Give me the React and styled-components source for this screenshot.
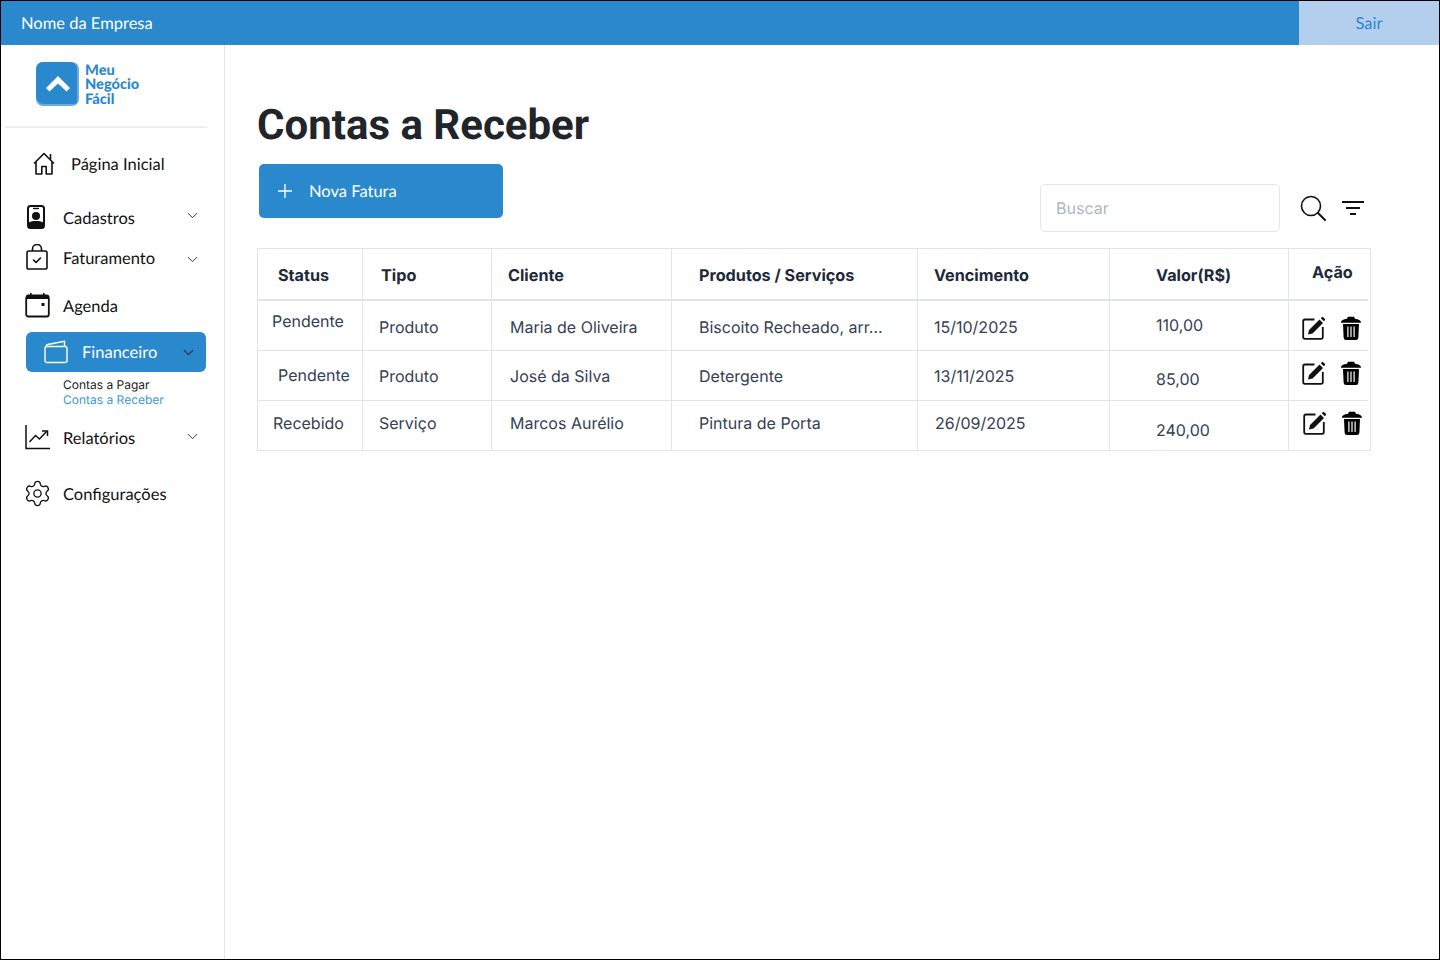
import React from 'react'
import styled, { createGlobalStyle } from 'styled-components'
import { ChevronDown, Plus, Settings } from 'lucide-react'

const GlobalStyle = createGlobalStyle`
  html, body {
    margin: 0;
    padding: 0;
    background: #fff;
    text-rendering: geometricPrecision;
  }
  * {
    box-sizing: border-box;
  }
`

const Frame = styled.div`
  width: 1440px;
  height: 960px;
  border: 1px solid #000;
  display: flex;
  flex-direction: column;
  overflow: hidden;
  font-family: Lato, sans-serif;
`

const TopBar = styled.header`
  height: 44px;
  flex: none;
  display: flex;
  align-items: center;
  justify-content: space-between;
  background: #2a88cc;
`

const CompanyName = styled.span`
  margin-left: 20px;
  font-size: 16.5px;
  color: #fff;
`

const LogoutButton = styled.button`
  width: 140px;
  height: 44px;
  border: 0;
  padding: 0;
  background: #b4cfee;
  color: #2a88cc;
  font: 16.5px Lato, sans-serif;
  text-rendering: geometricPrecision;
`

const Body = styled.div`
  flex: 1;
  display: flex;
  min-height: 0;
`

const Sidebar = styled.aside`
  width: 224px;
  flex: none;
  border-right: 1px solid #e2e4e9;
  padding: 17px 17px 0 4px;
`

const Brand = styled.div`
  height: 66px;
  padding-left: 31px;
  display: flex;
  align-items: flex-start;
  gap: 6px;
  border-bottom: 2px solid #eeeef2;
`

const BrandName = styled.div`
  font-size: 14.6px;
  line-height: 14.3px;
  font-weight: 900;
  color: #2a88cc;
  margin-top: 2px;
`

const Nav = styled.nav`
  display: flex;
  flex-direction: column;
  padding-top: 7px;
`

const NavRow = styled.div`
  height: ${p => p.$h}px;
  margin-top: ${p => p.$mt || 0}px;
  padding-left: ${p => p.$pl || 20}px;
  padding-right: 6px;
  display: flex;
  align-items: center;
  font-size: 16.5px;
  color: #111;
`

const NavIcon = styled.span`
  width: ${p => p.$w || 38}px;
  flex: none;
  display: flex;
  align-items: center;
`

const NavLabel = styled.span`
  flex: 1;
  padding-top: 2px;
`

const ActiveLabel = styled.span`
  flex: 1;
`

const Chevron = styled(ChevronDown)`
  margin-bottom: ${p => p.$up || 0}px;
`

const GearIcon = styled(Settings)`
  flex: none;
  margin-left: -2px;
`

const ActiveRow = styled.div`
  height: 40px;
  margin: 7px 1px 0 21px;
  padding: 0 9px 0 18px;
  display: flex;
  align-items: center;
  background: #2a88cc;
  border-radius: 6px;
  color: #fff;
  font-size: 16.5px;
`

const SubMenu = styled.div`
  margin: 5px 0 0 58px;
  font-family: Inter, sans-serif;
  font-size: 12px;
  line-height: 15px;
  color: #222;
`

const SubLink = styled.div`
  color: ${p => (p.$active ? '#3f97d8' : '#222')};
`

const Main = styled.main`
  flex: 1;
  padding: 53px 0 0 32px;
`

const Title = styled.h1`
  margin: 0;
  font-family: Roboto, sans-serif;
  font-size: 42px;
  line-height: 56px;
  font-weight: 700;
  color: #212529;
`

const Toolbar = styled.div`
  width: 1114px;
  height: 84px;
  margin-top: 10px;
  display: flex;
  align-items: flex-start;
  justify-content: space-between;
`

const PrimaryButton = styled.button`
  width: 244px;
  height: 54px;
  margin-left: 2px;
  border: 0;
  border-radius: 5px;
  padding: 0 0 0 15px;
  display: flex;
  align-items: center;
  gap: 13px;
  background: #2a88cc;
  color: #fff;
  font: 16.5px Lato, sans-serif;
  text-rendering: geometricPrecision;
`

const SearchArea = styled.div`
  display: flex;
  align-items: center;
  margin-top: 20px;
  padding-right: 6px;
`

const SearchBox = styled.div`
  width: 240px;
  height: 48px;
  border: 1px solid #e3e5ea;
  border-radius: 5px;
  padding-left: 15px;
  display: flex;
  align-items: center;
  font-family: Inter, sans-serif;
  font-size: 16px;
  color: #b0b6c0;
`

const SearchIcon = styled.svg`
  margin-left: 20px;
`

const FilterIcon = styled.svg`
  margin-left: 15px;
`

const Table = styled.div`
  width: 1114px;
  border: 1px solid #e0e3e9;
  font-family: Inter, sans-serif;
  font-size: 16px;
  color: #344054;
`

const Row = styled.div`
  display: grid;
  grid-template-columns: 105px 129px 180px 246px 192px 179px 79px;
  height: ${p => p.$h}px;
  border-bottom: ${p => p.$line}px solid #e0e3e9;
  margin-right: 2px;

  &:last-child {
    border-bottom: 0;
  }
`

const Cell = styled.div`
  border-right: 1px solid #e0e3e9;
  padding: ${p => p.$t}px 0 0 ${p => p.$l}px;
  line-height: 20px;
  white-space: nowrap;

  &:last-child {
    border-right: 0;
  }
`

const HeadCell = styled(Cell)`
  font-size: 16.2px;
  font-weight: 700;
  color: #1d2939;
`

const Actions = styled.div`
  display: flex;
  align-items: flex-start;
  gap: 15px;
  padding: ${p => p.$t}px 0 0 ${p => p.$l}px;
`

const HomeIcon = () => (
  <svg width="22" height="23" viewBox="0 0 22 23" fill="none" stroke="#111" strokeWidth="1.6" strokeLinejoin="round">
    <path d="M1 11.500 11 1.500l10 10" />
    <path d="M17.500 2v5.500" />
    <path d="M3 10v12h5.800v-7.500h4.400V22H19V10" />
  </svg>
)

const ContactIcon = () => (
  <svg width="22" height="24" viewBox="-2 0 22 24">
    <rect x="1" y="1" width="16" height="22" rx="2.500" fill="none" stroke="#111" strokeWidth="2" />
    <rect x="6" y="2.800" width="6" height="1.400" fill="#111" />
    <circle cx="9" cy="11" r="4" fill="#111" />
    <path d="M1 23v-5c2-1.600 4-2 8-2s6 .4 8 2v5z" fill="#111" />
  </svg>
)

const BagIcon = () => (
  <svg width="24" height="26" viewBox="0 0 24 26" fill="none" stroke="#111" strokeWidth="1.600" strokeLinejoin="round">
    <rect x="2" y="7" width="20" height="18" rx="1.800" />
    <path d="M7.500 7V5a4.500 4.500 0 0 1 9 0v2" />
    <path d="m8.500 16 2.500 2.500 4.500-4.500" strokeLinecap="round" />
  </svg>
)

const CalendarIcon = () => (
  <svg width="26" height="25" viewBox="0 0 26 25" fill="none">
    <rect x="1.200" y="3" width="22.600" height="20.500" rx="2" stroke="#111" strokeWidth="1.800" />
    <path d="M1 3.500a2 2 0 0 1 2-2h19a2 2 0 0 1 2 2V6H1z" fill="#111" />
    <rect x="5" y="0" width="1.600" height="3" fill="#111" />
    <rect x="18" y="0" width="1.600" height="3" fill="#111" />
    <rect x="16.500" y="10" width="3" height="3" fill="#111" />
  </svg>
)

const WalletIcon = () => (
  <svg width="26" height="24" viewBox="0 0 26 24" fill="none" stroke="#fff" strokeWidth="1.400" strokeLinejoin="round">
    <rect x="1" y="6.500" width="22" height="16" rx="2" />
    <path d="M2 6.500c0-1 .6-1.700 1.600-2L20.500 1.200v5.300" />
  </svg>
)

const ChartIcon = () => (
  <svg width="25" height="25" viewBox="0 0 25 25" fill="none" stroke="#111" strokeWidth="1.500">
    <path d="M1 0v23.500h24" />
    <path d="m4.500 17 6-6.500 4 3.500 7-7.500" />
    <path d="M17 6h5.500v5" />
  </svg>
)

const EditIcon = () => (
  <svg width="24" height="24" viewBox="0 0 24 24">
    <path d="M12.500 3.500H3a1.800 1.800 0 0 0-1.800 1.800V21A1.800 1.800 0 0 0 3 22.800h16a1.800 1.800 0 0 0 1.800-1.800V11" fill="none" stroke="#111" strokeWidth="1.800" />
    <path d="M6 18.500 7 14 17.500 3.500l3.500 3.500L10.500 17.500zM18.800 2.200l1-1a1 1 0 0 1 1.400 0l1.600 1.600a1 1 0 0 1 0 1.400l-1 1z" fill="#111" />
  </svg>
)

const TrashIcon = () => (
  <svg width="20" height="24" viewBox="0 0 20 24">
    <path d="M0 6.800C0 3.800 3 3.300 6 2.700L7 .8h6l1 1.900c3 .6 6 1.100 6 4.100z" fill="#000" />
    <path fillRule="evenodd" d="M2 8h16l-.6 13.500A2.600 2.600 0 0 1 14.800 24H5.200a2.600 2.600 0 0 1-2.600-2.500zM6.300 10.500V21h1.200V10.500zm3.100 0V21h1.200V10.500zm3.100 0V21h1.200V10.500z" fill="#000" />
  </svg>
)

const rows = [
  {
    h: 50,
    cells: [
      ['Pendente', 14, 10],
      ['Produto', 16, 16],
      ['Maria de Oliveira', 18, 16],
      ['Biscoito Recheado, arr...', 27, 16],
      ['15/10/2025', 16, 16],
      ['110,00', 46, 14],
    ],
    action: { t: 15, l: 13 },
  },
  {
    h: 50,
    cells: [
      ['Pendente', 20, 14],
      ['Produto', 16, 15],
      ['José da Silva', 18, 15],
      ['Detergente', 27, 15],
      ['13/11/2025', 16, 15],
      ['85,00', 46, 18],
    ],
    action: { t: 10, l: 13 },
  },
  {
    h: 49,
    cells: [
      ['Recebido', 15, 12],
      ['Serviço', 16, 12],
      ['Marcos Aurélio', 18, 12],
      ['Pintura de Porta', 27, 12],
      ['26/09/2025', 17, 12],
      ['240,00', 46, 19],
    ],
    action: { t: 10, l: 14 },
  },
]

const heads = [
  ['Status', 20],
  ['Tipo', 18],
  ['Cliente', 16],
  ['Produtos / Serviços', 27],
  ['Vencimento', 16],
  ['Valor(R$)', 46],
]

const App = () => (
  <Frame>
    <GlobalStyle />
    <TopBar>
      <CompanyName>Nome da Empresa</CompanyName>
      <LogoutButton>Sair</LogoutButton>
    </TopBar>
    <Body>
      <Sidebar>
        <Brand>
          <svg width="43" height="44" viewBox="0 0 43 44">
            <rect width="43" height="44" rx="7" fill="#6aabdf" />
            <path d="M0 7a7 7 0 0 1 7-7h27a7 7 0 0 1 7 7v32a3 3 0 0 1-3 3H8a8 8 0 0 1-8-8z" fill="#2a88cc" />
            <path d="M10 26 22 14l12 12-3.500 3.500L22 21.500l-8.500 8z" fill="#fff" />
          </svg>
          <BrandName>Meu<br />Negócio<br />Fácil</BrandName>
        </Brand>
        <Nav>
          <NavRow $h={56} $pl={28}><NavIcon><HomeIcon /></NavIcon><NavLabel>Página Inicial</NavLabel></NavRow>
          <NavRow $h={40} $mt={6}>
            <NavIcon><ContactIcon /></NavIcon><NavLabel>Cadastros</NavLabel>
            <Chevron size={17} strokeWidth={1.200} $up={4} />
          </NavRow>
          <NavRow $h={40}>
            <NavIcon><BagIcon /></NavIcon><NavLabel>Faturamento</NavLabel>
            <Chevron size={17} strokeWidth={1.200} $up={-4} />
          </NavRow>
          <NavRow $h={40} $mt={8}><NavIcon><CalendarIcon /></NavIcon><NavLabel>Agenda</NavLabel></NavRow>
          <ActiveRow>
            <NavIcon><WalletIcon /></NavIcon><ActiveLabel>Financeiro</ActiveLabel>
            <Chevron size={17} strokeWidth={1.500} color="#0d2a42" />
          </ActiveRow>
          <SubMenu>
            <SubLink>Contas a Pagar</SubLink>
            <SubLink $active>Contas a Receber</SubLink>
          </SubMenu>
          <NavRow $h={40} $mt={10}>
            <NavIcon><ChartIcon /></NavIcon><NavLabel>Relatórios</NavLabel>
            <Chevron size={17} strokeWidth={1.200} $up={2} />
          </NavRow>
          <NavRow $h={40} $mt={16}>
            <NavIcon><GearIcon size={29} strokeWidth={1.100} /></NavIcon><NavLabel>Configurações</NavLabel>
          </NavRow>
        </Nav>
      </Sidebar>
      <Main>
        <Title>Contas a Receber</Title>
        <Toolbar>
          <PrimaryButton><Plus size={22} strokeWidth={1.500} />Nova Fatura</PrimaryButton>
          <SearchArea>
            <SearchBox>Buscar</SearchBox>
            <SearchIcon width="26" height="26" viewBox="0 0 26 26" fill="none" stroke="#111" strokeWidth="1.600" strokeLinecap="round">
              <circle cx="11" cy="11" r="9.500" />
              <path d="m18 18 7 7" strokeWidth="2" />
            </SearchIcon>
            <FilterIcon width="24" height="16" viewBox="0 0 24 16" stroke="#111" strokeWidth="1.800">
              <path d="M1 2h22M5 8h14M9 14h6" />
            </FilterIcon>
          </SearchArea>
        </Toolbar>
        <Table>
          <Row $h={52} $line={2}>
            {heads.map(([label, l]) => <HeadCell key={label} $t={16} $l={l}>{label}</HeadCell>)}
            <HeadCell $t={13} $l={23}>Ação</HeadCell>
          </Row>
          {rows.map((row, i) => (
            <Row key={i} $h={row.h} $line={1}>
              {row.cells.map(([text, l, t]) => <Cell key={text} $l={l} $t={t}>{text}</Cell>)}
              <Actions $t={row.action.t} $l={row.action.l}><EditIcon /><TrashIcon /></Actions>
            </Row>
          ))}
        </Table>
      </Main>
    </Body>
  </Frame>
)

export default App
